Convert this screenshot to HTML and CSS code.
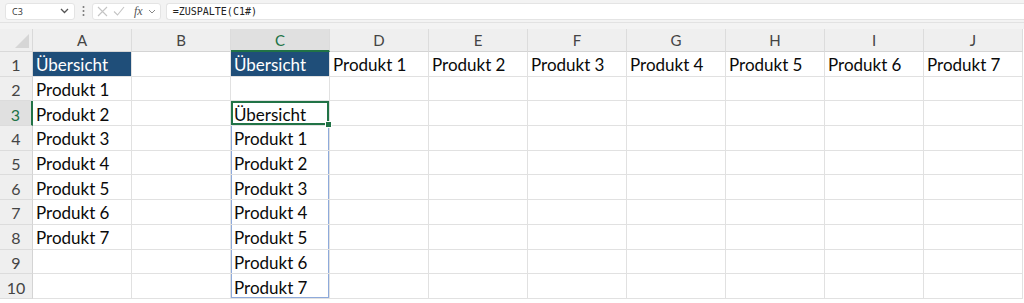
FILE: index.html
```html
<!DOCTYPE html>
<html lang="de">
<head>
    <meta charset="UTF-8">
    <title>ZUSPALTE</title>
    <link rel="stylesheet" href="styles.css">
</head>
<body>
    <div class="toolbar">
        <div class="namebox">
            <span>C3</span>
            <svg width="9" height="6" viewBox="0 0 9 6"><path d="M1 1 L4.5 4.5 L8 1" fill="none" stroke="#555" stroke-width="1.3"/></svg>
        </div>
        <div class="dots">
            <svg width="3" height="12" viewBox="0 0 3 12"><circle cx="1.5" cy="2" r="1" fill="#777"/><circle cx="1.5" cy="6" r="1" fill="#777"/><circle cx="1.5" cy="10" r="1" fill="#777"/></svg>
        </div>
        <div class="fbuttons">
            <svg width="11" height="11" viewBox="0 0 11 11"><path d="M1 1 L10 10 M10 1 L1 10" stroke="#c4c4c4" stroke-width="1.1"/></svg>
            <svg width="12" height="10" viewBox="0 0 12 10"><path d="M1 5.5 L4.5 9 L11 1" fill="none" stroke="#c4c4c4" stroke-width="1.1"/></svg>
            <span class="fx">fx</span>
            <svg width="8" height="5" viewBox="0 0 8 5"><path d="M1 1 L4 4 L7 1" fill="none" stroke="#888" stroke-width="1"/></svg>
        </div>
        <div class="formula">=ZUSPALTE(C1#)</div>
    </div>
    <div class="band"></div>

    <div class="sheet">
        <div class="corner"><svg width="14" height="14" viewBox="0 0 14 14"><path d="M14 0 L14 14 L0 14 Z" fill="#d6d6d6"/></svg></div>
        <div class="colhead">A</div>
        <div class="colhead">B</div>
        <div class="colhead active">C</div>
        <div class="colhead">D</div>
        <div class="colhead">E</div>
        <div class="colhead">F</div>
        <div class="colhead">G</div>
        <div class="colhead">H</div>
        <div class="colhead">I</div>
        <div class="colhead">J</div>

        <div class="rowhead">1</div>
        <div class="cell blue">Übersicht</div>
        <div class="cell"></div>
        <div class="cell blue">Übersicht</div>
        <div class="cell">Produkt 1</div>
        <div class="cell">Produkt 2</div>
        <div class="cell">Produkt 3</div>
        <div class="cell">Produkt 4</div>
        <div class="cell">Produkt 5</div>
        <div class="cell">Produkt 6</div>
        <div class="cell">Produkt 7</div>

        <div class="rowhead">2</div>
        <div class="cell">Produkt 1</div>
        <div class="cell"></div>
        <div class="cell"></div>
        <div class="cell"></div><div class="cell"></div><div class="cell"></div><div class="cell"></div><div class="cell"></div><div class="cell"></div><div class="cell"></div>

        <div class="rowhead active">3</div>
        <div class="cell">Produkt 2</div>
        <div class="cell"></div>
        <div class="cell selected">Übersicht<span class="handle"></span></div>
        <div class="cell"></div><div class="cell"></div><div class="cell"></div><div class="cell"></div><div class="cell"></div><div class="cell"></div><div class="cell"></div>

        <div class="rowhead">4</div>
        <div class="cell">Produkt 3</div>
        <div class="cell"></div>
        <div class="cell spill">Produkt 1</div>
        <div class="cell"></div><div class="cell"></div><div class="cell"></div><div class="cell"></div><div class="cell"></div><div class="cell"></div><div class="cell"></div>

        <div class="rowhead">5</div>
        <div class="cell">Produkt 4</div>
        <div class="cell"></div>
        <div class="cell spill">Produkt 2</div>
        <div class="cell"></div><div class="cell"></div><div class="cell"></div><div class="cell"></div><div class="cell"></div><div class="cell"></div><div class="cell"></div>

        <div class="rowhead">6</div>
        <div class="cell">Produkt 5</div>
        <div class="cell"></div>
        <div class="cell spill">Produkt 3</div>
        <div class="cell"></div><div class="cell"></div><div class="cell"></div><div class="cell"></div><div class="cell"></div><div class="cell"></div><div class="cell"></div>

        <div class="rowhead">7</div>
        <div class="cell">Produkt 6</div>
        <div class="cell"></div>
        <div class="cell spill">Produkt 4</div>
        <div class="cell"></div><div class="cell"></div><div class="cell"></div><div class="cell"></div><div class="cell"></div><div class="cell"></div><div class="cell"></div>

        <div class="rowhead">8</div>
        <div class="cell">Produkt 7</div>
        <div class="cell"></div>
        <div class="cell spill">Produkt 5</div>
        <div class="cell"></div><div class="cell"></div><div class="cell"></div><div class="cell"></div><div class="cell"></div><div class="cell"></div><div class="cell"></div>

        <div class="rowhead">9</div>
        <div class="cell"></div>
        <div class="cell"></div>
        <div class="cell spill">Produkt 6</div>
        <div class="cell"></div><div class="cell"></div><div class="cell"></div><div class="cell"></div><div class="cell"></div><div class="cell"></div><div class="cell"></div>

        <div class="rowhead">10</div>
        <div class="cell"></div>
        <div class="cell"></div>
        <div class="cell spill last">Produkt 7</div>
        <div class="cell"></div><div class="cell"></div><div class="cell"></div><div class="cell"></div><div class="cell"></div><div class="cell"></div><div class="cell"></div>
    </div>
</body>
</html>
```

FILE: styles.css
```css
body {
    margin: 0;
    font-family: Lato, "Open Sans", sans-serif;
    background: #ffffff;
    overflow: hidden;
}

.toolbar {
    display: flex;
    align-items: center;
    height: 23px;
    padding: 0 0 0 5px;
    background: #f3f3f3;
    box-sizing: border-box;
    border-bottom: 1px solid #e2e2e2;
}

.namebox {
    display: flex;
    align-items: center;
    justify-content: space-between;
    width: 70px;
    height: 17px;
    padding: 0 5px 0 6px;
    box-sizing: border-box;
    background: #fff;
    border: 1px solid #e4e4e4;
    border-radius: 3px;
    font-family: "Open Sans", sans-serif;
    font-size: 9px;
    color: #333;
}

.dots {
    display: flex;
    align-items: center;
    width: 17px;
    justify-content: center;
}

.fbuttons {
    display: flex;
    align-items: center;
    gap: 5px;
    height: 17px;
    padding: 0 4px 0 4px;
    box-sizing: border-box;
    background: #fff;
    border: 1px solid #e4e4e4;
    border-radius: 3px;
}

.fx {
    font-family: "Liberation Serif", serif;
    font-style: italic;
    font-size: 12px;
    color: #555;
    margin-left: 4px;
}

.formula {
    flex: 1;
    height: 17px;
    margin-left: 5px;
    padding-left: 6px;
    box-sizing: border-box;
    background: #fff;
    border: 1px solid #e4e4e4;
    border-right: none;
    border-radius: 3px 0 0 3px;
    font-family: "DejaVu Sans Mono", monospace;
    font-size: 10px;
    line-height: 15px;
    color: #222;
}

.band {
    height: 6px;
    background: #f3f3f3;
}

.sheet {
    display: grid;
    grid-template-columns: 33px repeat(10, 99px);
    grid-template-rows: 23px repeat(10, 24.7px);
}

.corner {
    display: flex;
    align-items: flex-end;
    justify-content: flex-end;
    padding: 0 3px 3px 0;
    background: #efefef;
    border-right: 1px solid #d9d9d9;
    border-bottom: 1px solid #d9d9d9;
}

.colhead {
    display: flex;
    align-items: center;
    justify-content: center;
    background: #efefef;
    border-right: 1px solid #dcdcdc;
    border-bottom: 1px solid #d4d4d4;
    font-size: 15px;
    color: #444;
}

.colhead.active {
    background: #e0e0e0;
    color: #217346;
    border-bottom: 2px solid #217346;
}

.rowhead {
    display: flex;
    align-items: center;
    justify-content: center;
    padding-top: 2px;
    background: #efefef;
    border-right: 1px solid #d4d4d4;
    border-bottom: 1px solid #dcdcdc;
    font-size: 16px;
    color: #444;
}

.rowhead.active {
    background: #e0e0e0;
    color: #217346;
    border-right: 2px solid #217346;
}

.cell {
    position: relative;
    display: flex;
    align-items: center;
    padding: 2px 0 0 3px;
    border-right: 1px solid #e1e1e1;
    border-bottom: 1px solid #e1e1e1;
    font-size: 17px;
    color: #0a0a0a;
    white-space: nowrap;
}

.cell.blue {
    background: #1f4e79;
    color: #fff;
}

.cell.selected {
    box-shadow: inset 0 0 0 2px #217346;
}

.handle {
    position: absolute;
    right: -3px;
    bottom: -3px;
    width: 5px;
    height: 5px;
    background: #217346;
    border: 1px solid #fff;
    z-index: 2;
}

.cell.spill {
    box-shadow: inset 1px 0 0 #8eaadb, inset -1px 0 0 #8eaadb;
}

.cell.spill.last {
    box-shadow: inset 1px 0 0 #8eaadb, inset -1px 0 0 #8eaadb, inset 0 -1px 0 #8eaadb;
}
```
